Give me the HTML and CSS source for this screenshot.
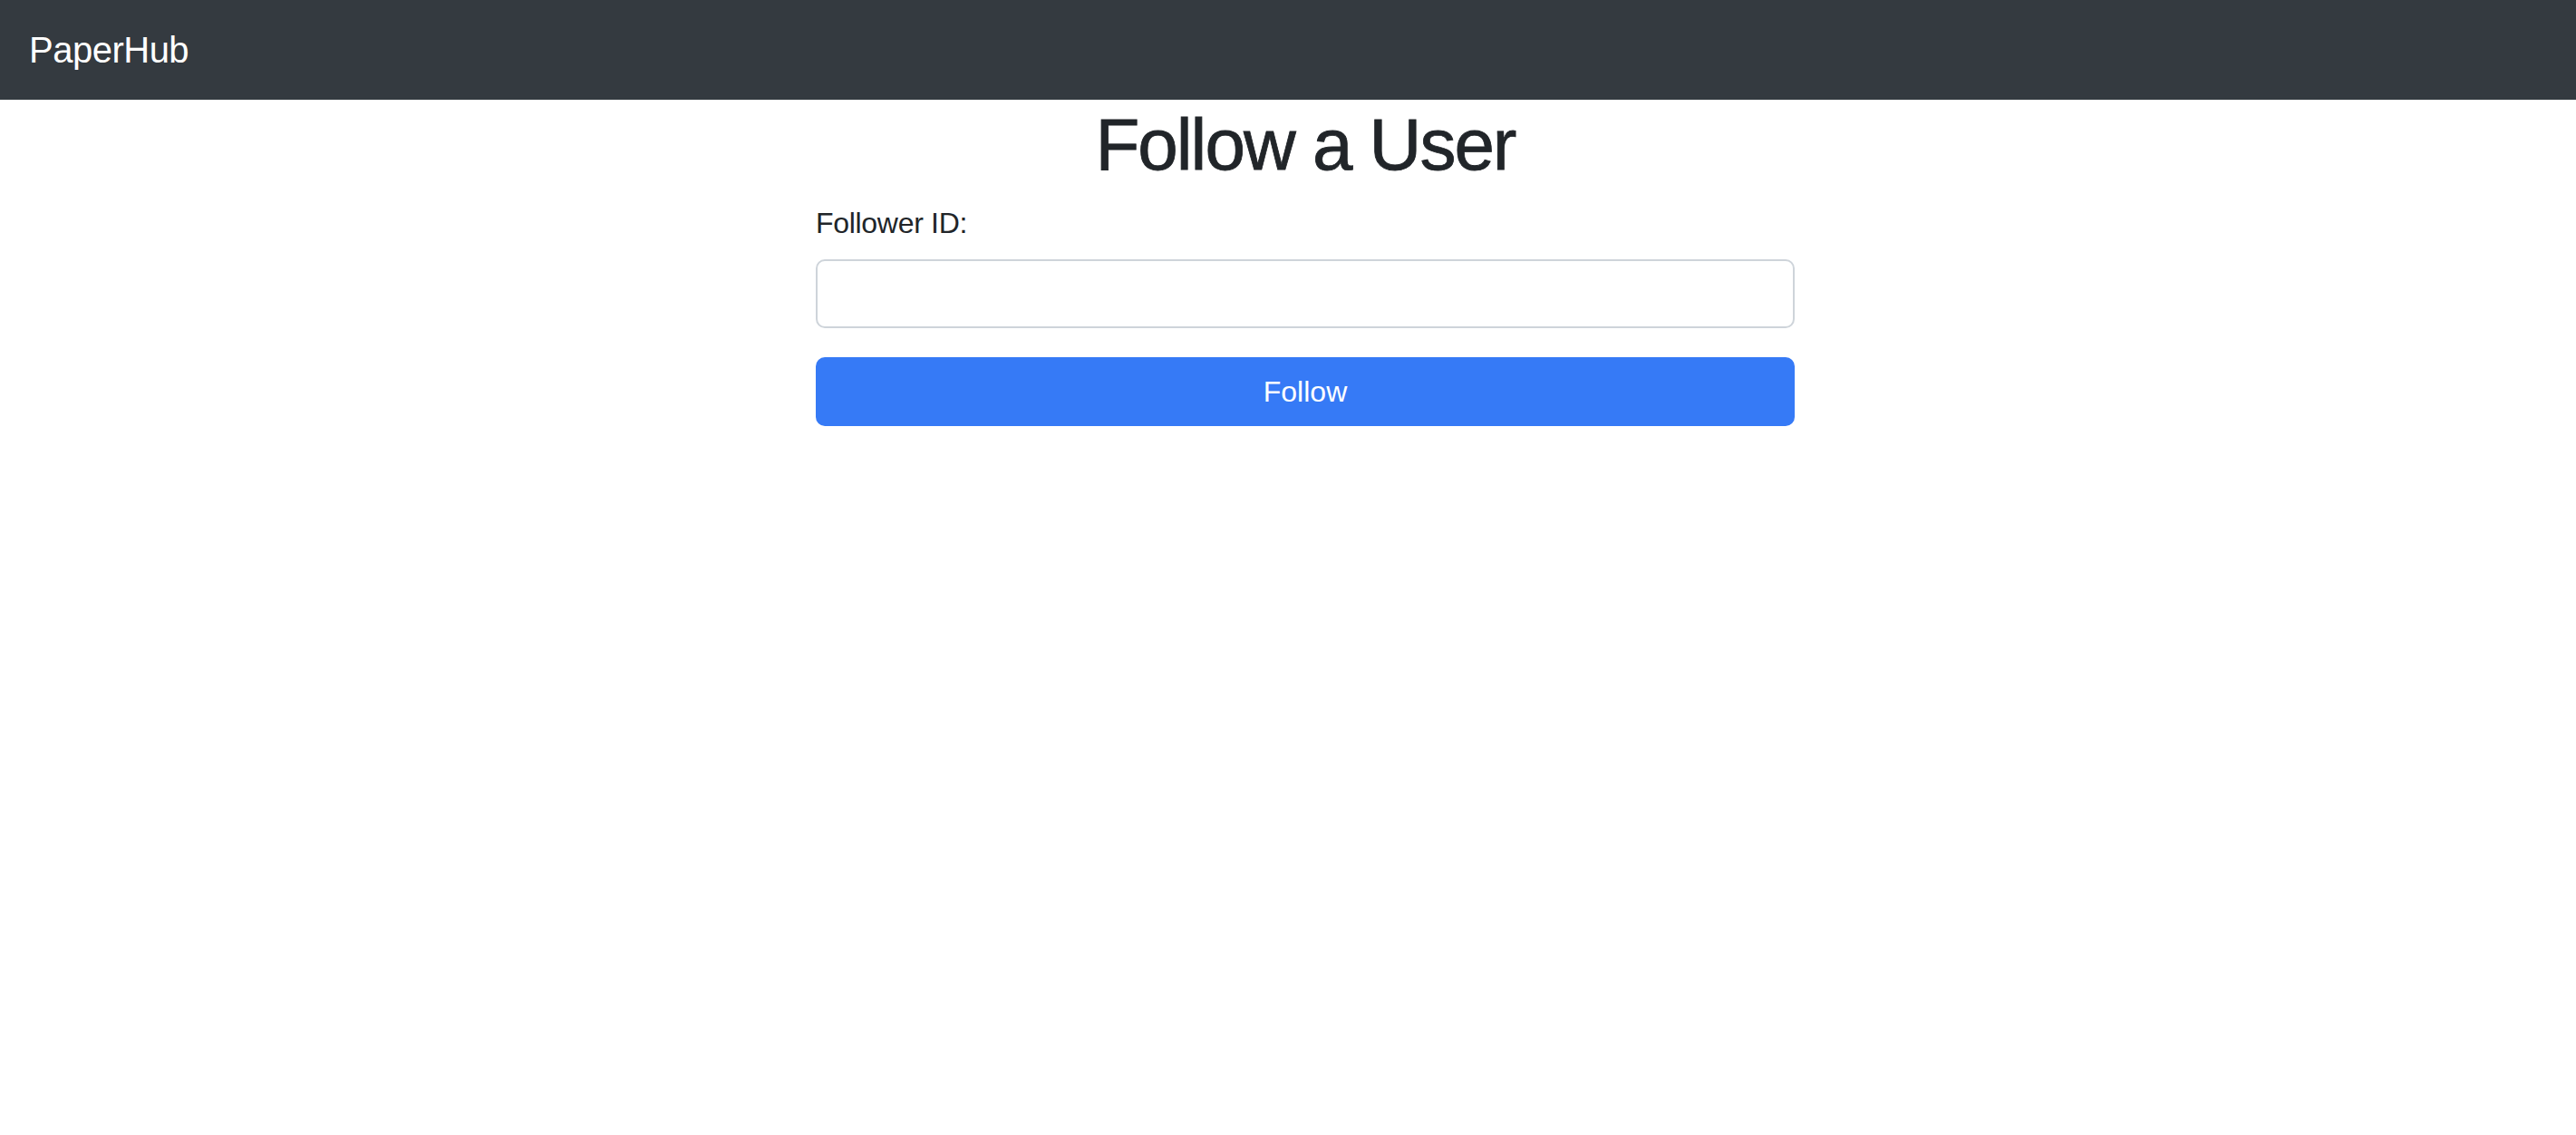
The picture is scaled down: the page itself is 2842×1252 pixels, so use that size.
FILE: index.html
```html
<!DOCTYPE html>
<html lang="en">
<head>
<meta charset="utf-8">
<title>PaperHub - Follow a User</title>
<link rel="stylesheet" href="styles.css">
</head>
<body>
<nav class="navbar">
  <a class="brand" href="#">PaperHub</a>
</nav>
<main class="container">
  <h1 class="title">Follow a User</h1>
  <form class="form">
    <label class="label" for="follower">Follower ID:</label>
    <input class="input" id="follower" type="text">
    <button class="btn" type="button">Follow</button>
  </form>
</main>
</body>
</html>
```

FILE: styles.css
```css
* { box-sizing: border-box; }
body {
  margin: 0;
  font-family: "Liberation Sans", Arial, sans-serif;
  color: #212529;
  background: #fff;
}
.navbar {
  height: 110px;
  background: #343a40;
  display: flex;
  align-items: center;
  padding-left: 32px;
}
.brand {
  color: #fff;
  text-decoration: none;
  font-size: 40px;
  letter-spacing: -0.5px;
  line-height: 60px;
}
.container {
  width: 1080px;
  margin-left: 900px;
}
.title {
  margin: 0 0 14px;
  padding-top: 2px;
  font-size: 80px;
  font-weight: 400;
  letter-spacing: -2px;
  line-height: 96px;
  text-align: center;
  -webkit-text-stroke: 0.8px #212529;
}
.form { display: flex; flex-direction: column; }
.label {
  font-size: 32px;
  line-height: 48px;
  letter-spacing: -0.3px;
  margin-bottom: 16px;
}
.input {
  width: 100%;
  height: 76px;
  border: 2px solid #ced4da;
  border-radius: 10px;
  margin-bottom: 32px;
  font-size: 32px;
  padding: 0 24px;
}
.btn {
  width: 100%;
  height: 76px;
  border: none;
  border-radius: 10px;
  background: #367af6;
  color: #fff;
  font-family: inherit;
  font-size: 32px;
}
```
